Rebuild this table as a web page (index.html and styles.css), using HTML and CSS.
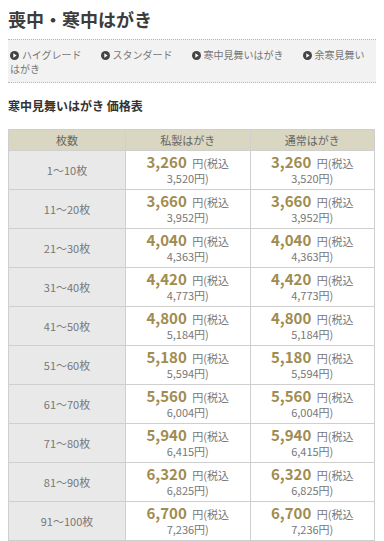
FILE: index.html
```html
<!DOCTYPE html>
<html lang="ja">
<head>
<meta charset="utf-8">
<link rel="stylesheet" href="styles.css">
</head>
<body>
<h1 class="title">喪中・寒中はがき</h1>
<ul class="nav">
  <li class="nav-item"><svg class="ico" viewBox="0 0 9 9" width="9" height="9"><circle cx="4.5" cy="4.5" r="4.5" fill="#444"/><polygon points="3.3,2.3 6.6,4.5 3.3,6.7" fill="#fff"/></svg>ハイグレード<br>はがき</li>
  <li class="nav-item"><svg class="ico" viewBox="0 0 9 9" width="9" height="9"><circle cx="4.5" cy="4.5" r="4.5" fill="#444"/><polygon points="3.3,2.3 6.6,4.5 3.3,6.7" fill="#fff"/></svg>スタンダード</li>
  <li class="nav-item"><svg class="ico" viewBox="0 0 9 9" width="9" height="9"><circle cx="4.5" cy="4.5" r="4.5" fill="#444"/><polygon points="3.3,2.3 6.6,4.5 3.3,6.7" fill="#fff"/></svg>寒中見舞いはがき</li>
  <li class="nav-item"><svg class="ico" viewBox="0 0 9 9" width="9" height="9"><circle cx="4.5" cy="4.5" r="4.5" fill="#444"/><polygon points="3.3,2.3 6.6,4.5 3.3,6.7" fill="#fff"/></svg>余寒見舞い</li>
</ul>
<h2 class="subtitle">寒中見舞いはがき 価格表</h2>
<table class="price-table">
  <thead>
    <tr><th class="c1">枚数</th><th>私製はがき</th><th>通常はがき</th></tr>
  </thead>
  <tbody>
    <tr><td class="qty">1～10枚</td><td class="pc"><span class="l1"><span class="num">3,260</span> 円(税込</span><span class="l2">3,520円)</span></td><td class="pc"><span class="l1"><span class="num">3,260</span> 円(税込</span><span class="l2">3,520円)</span></td></tr>
    <tr><td class="qty">11～20枚</td><td class="pc"><span class="l1"><span class="num">3,660</span> 円(税込</span><span class="l2">3,952円)</span></td><td class="pc"><span class="l1"><span class="num">3,660</span> 円(税込</span><span class="l2">3,952円)</span></td></tr>
    <tr><td class="qty">21～30枚</td><td class="pc"><span class="l1"><span class="num">4,040</span> 円(税込</span><span class="l2">4,363円)</span></td><td class="pc"><span class="l1"><span class="num">4,040</span> 円(税込</span><span class="l2">4,363円)</span></td></tr>
    <tr><td class="qty">31～40枚</td><td class="pc"><span class="l1"><span class="num">4,420</span> 円(税込</span><span class="l2">4,773円)</span></td><td class="pc"><span class="l1"><span class="num">4,420</span> 円(税込</span><span class="l2">4,773円)</span></td></tr>
    <tr><td class="qty">41～50枚</td><td class="pc"><span class="l1"><span class="num">4,800</span> 円(税込</span><span class="l2">5,184円)</span></td><td class="pc"><span class="l1"><span class="num">4,800</span> 円(税込</span><span class="l2">5,184円)</span></td></tr>
    <tr><td class="qty">51～60枚</td><td class="pc"><span class="l1"><span class="num">5,180</span> 円(税込</span><span class="l2">5,594円)</span></td><td class="pc"><span class="l1"><span class="num">5,180</span> 円(税込</span><span class="l2">5,594円)</span></td></tr>
    <tr><td class="qty">61～70枚</td><td class="pc"><span class="l1"><span class="num">5,560</span> 円(税込</span><span class="l2">6,004円)</span></td><td class="pc"><span class="l1"><span class="num">5,560</span> 円(税込</span><span class="l2">6,004円)</span></td></tr>
    <tr><td class="qty">71～80枚</td><td class="pc"><span class="l1"><span class="num">5,940</span> 円(税込</span><span class="l2">6,415円)</span></td><td class="pc"><span class="l1"><span class="num">5,940</span> 円(税込</span><span class="l2">6,415円)</span></td></tr>
    <tr><td class="qty">81～90枚</td><td class="pc"><span class="l1"><span class="num">6,320</span> 円(税込</span><span class="l2">6,825円)</span></td><td class="pc"><span class="l1"><span class="num">6,320</span> 円(税込</span><span class="l2">6,825円)</span></td></tr>
    <tr><td class="qty">91～100枚</td><td class="pc"><span class="l1"><span class="num">6,700</span> 円(税込</span><span class="l2">7,236円)</span></td><td class="pc"><span class="l1"><span class="num">6,700</span> 円(税込</span><span class="l2">7,236円)</span></td></tr>
    <tr><td class="qty">101～110枚</td><td class="pc"><span class="l1"><span class="num">7,080</span> 円(税込</span><span class="l2">7,646円)</span></td><td class="pc"><span class="l1"><span class="num">7,080</span> 円(税込</span><span class="l2">7,646円)</span></td></tr>
  </tbody>
</table>
</body>
</html>
```
FILE: styles.css
```css
html, body {
  margin: 0;
  padding: 0;
  background: #fff;
}
body {
  padding: 8px;
  font-family: "Noto Sans CJK JP", "Noto Sans", sans-serif;
  color: #666;
  overflow: hidden;
  height: 525px;
}
.title {
  margin: 0;
  font-size: 18px;
  line-height: 22px;
  font-weight: bold;
  color: #3c3c3c;
}
.nav {
  list-style: none;
  margin: 9px 0 0 0;
  padding: 8px 2px 7px 2px;
  background: #f2f2f2;
  border-top: 1px dotted #b8b8b8;
  border-bottom: 1px dotted #b8b8b8;
  display: flex;
  gap: 19px;
  height: 27px;
  box-sizing: content-box;
}
.nav-item {
  font-size: 10px;
  line-height: 14px;
  color: #777;
  white-space: nowrap;
}
.ico {
  display: inline-block;
  vertical-align: -1px;
  margin-right: 3px;
}
.subtitle {
  margin: 11px 0 0 0;
  font-size: 12px;
  line-height: 24px;
  font-weight: bold;
  color: #333;
}
.price-table {
  margin-top: 11px;
  width: 367px;
  border-collapse: collapse;
  font-size: 11px;
}
.price-table th,
.price-table td {
  border: 1px solid #cfcfcf;
  text-align: center;
}
.price-table th {
  background: #d9d7c1;
  font-weight: normal;
  color: #666;
  height: 20px;
  padding: 0;
  line-height: 20px;
}
.price-table th.c1 {
  width: 116px;
}
.qty {
  background: #e9e9e9;
  color: #777;
  vertical-align: middle;
  padding: 0;
}
.pc {
  padding: 3px 2px;
  color: #777;
  background: #fff;
}
.l1,
.l2 {
  display: block;
  height: 16px;
  line-height: 16px;
  white-space: nowrap;
}
.num {
  font-size: 15px;
  font-weight: bold;
  color: #a08c50;
  margin-right: 3px;
}
```
